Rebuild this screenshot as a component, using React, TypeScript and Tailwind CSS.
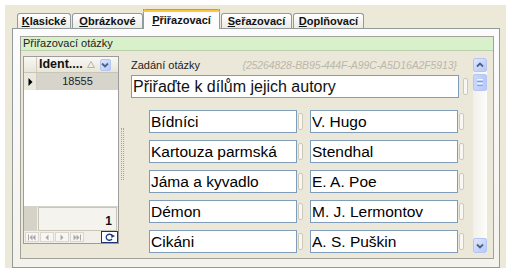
import React from "react";

function Tab({ first, rest, w, ml }: { first: string; rest: string; w: string; ml: string }) {
  return (
    <div
      className={`${w} ${ml} h-[15px] border border-b-0 border-[#919b9c] rounded-t-[3px] bg-gradient-to-b from-[#ffffff] to-[#ecebe5] flex items-center justify-center text-[11px] font-bold leading-none pt-[1px]`}
    >
      <span>
        <span className="underline underline-offset-[1px]">{first}</span>
        {rest}
      </span>
    </div>
  );
}

function Chevron({ up }: { up?: boolean }) {
  return (
    <svg width="8" height="6" viewBox="0 0 8 6">
      {up ? (
        <path d="M1 4.5 L4 1.5 L7 4.5" fill="none" stroke="#4d6185" strokeWidth="1.8" />
      ) : (
        <path d="M1 1.5 L4 4.5 L7 1.5" fill="none" stroke="#4d6185" strokeWidth="1.8" />
      )}
    </svg>
  );
}

function NavBtn({ kind }: { kind: "first" | "prev" | "next" | "last" }) {
  const c = "#a9a9a9";
  return (
    <div className="w-[14px] h-[10px] border border-[#d9d7cf] bg-[#f7f6f2] flex items-center justify-center">
      <svg width="10" height="7" viewBox="0 0 10 7">
        {kind === "first" && (
          <g fill={c}>
            <rect x="1" y="0.5" width="1" height="6" />
            <path d="M5.5 0.5 L2.5 3.5 L5.5 6.5 Z" />
            <path d="M8.5 0.5 L5.5 3.5 L8.5 6.5 Z" />
          </g>
        )}
        {kind === "prev" && <path d="M6.5 0.5 L3.5 3.5 L6.5 6.5 Z" fill={c} />}
        {kind === "next" && <path d="M3.5 0.5 L6.5 3.5 L3.5 6.5 Z" fill={c} />}
        {kind === "last" && (
          <g fill={c}>
            <path d="M1.5 0.5 L4.5 3.5 L1.5 6.5 Z" />
            <path d="M4.5 0.5 L7.5 3.5 L4.5 6.5 Z" />
            <rect x="8" y="0.5" width="1" height="6" />
          </g>
        )}
      </svg>
    </div>
  );
}

function Handle() {
  return <div className="w-[5px] h-[17px] rounded-[2px] border border-[#cdc9ba] bg-[#f8f7f3]" />;
}

function Box({ text, w }: { text: string; w: string }) {
  return (
    <div className={`${w} h-[23px] border border-[#7f9db9] bg-white flex items-center pl-[1px] text-[15.5px] leading-none text-black whitespace-nowrap overflow-hidden`}>
      {text}
    </div>
  );
}

export default function App() {
  const pairs: [string, string][] = [
    ["Bídníci", "V. Hugo"],
    ["Kartouza parmská", "Stendhal"],
    ["Jáma a kyvadlo", "E. A. Poe"],
    ["Démon", "M. J. Lermontov"],
    ["Cikáni", "A. S. Puškin"],
  ];
  return (
    <div className="w-[527px] h-[276px] bg-white overflow-hidden font-['Liberation_Sans',Arial,sans-serif] text-[#111]">
      <div className="mt-[5px] ml-[5px] w-[501px] h-[263px] bg-[#ece9d8] pl-[7px] pt-[4px]">
        {/* tabs */}
        <div className="flex items-end h-[19px] pl-[5px]">
          <Tab first="K" rest="lasické" w="w-[54px]" ml="ml-0" />
          <Tab first="O" rest="brázkové" w="w-[71px]" ml="ml-[1px]" />
          <div className="w-[77px] h-[20px] -mb-px relative z-10 border-x border-[#919b9c] bg-[#fcfcfe] flex flex-col items-center">
            <div className="w-[calc(100%+2px)] -mx-px h-[3px] rounded-t-[3px] bg-[#ffc83c] border-t border-[#e68b2c]" />
            <div className="text-[11px] font-bold leading-none mt-[3px]">
              <span className="underline underline-offset-[1px]">P</span>řiřazovací
            </div>
          </div>
          <Tab first="S" rest="eřazovací" w="w-[71px]" ml="ml-[1px]" />
          <Tab first="D" rest="oplňovací" w="w-[71px]" ml="ml-[1px]" />
        </div>

        {/* panel */}
        <div className="w-[488px] h-[240px] border border-[#919b9c] bg-gradient-to-b from-[#fcfcfe] to-[#f3f2ec] pl-[7px] pt-[7px]">
          <div className="w-[474px] h-[223px] border border-[#a3a29a] bg-[#ebe8da] flex flex-col">
            <div className="h-[14px] bg-[#d9f1cb] border-b border-[#b9d2ad] text-[11px] leading-[13px] pl-[2px] text-[#222]">
              Přiřazovací otázky
            </div>
            <div className="flex pl-[2px] pt-[5px]">
              {/* grid */}
              <div className="w-[96px] h-[188px] border border-[#9c9c9c] bg-white flex flex-col">
                <div className="h-[16px] flex bg-gradient-to-b from-[#f9f8f3] to-[#e8e6da] border-b border-[#c9c6b8]">
                  <div className="w-[13px] border-r border-[#d0cdc0]" />
                  <div className="flex-1 flex items-center pl-[2px]">
                    <span className="text-[12.5px] font-bold leading-none text-[#111]">Ident....</span>
                    <svg className="ml-[4px]" width="8" height="7" viewBox="0 0 8 7">
                      <path d="M4 0.5 L7.5 6.5 L0.5 6.5 Z" fill="none" stroke="#b5b3a8" strokeWidth="1" />
                    </svg>
                    <div className="ml-[5px] w-[11px] h-[12px] rounded-[2px] border border-[#b3c6f4] bg-gradient-to-br from-[#dde6fd] to-[#b7c9f7] flex items-center justify-center">
                      <Chevron />
                    </div>
                  </div>
                </div>
                <div className="h-[17px] flex">
                  <div className="w-[13px] bg-[#ebe9df] border-r border-[#d0cdc0] flex items-center justify-center">
                    <svg width="5" height="8" viewBox="0 0 5 8">
                      <path d="M0.5 0 L4.5 4 L0.5 8 Z" fill="#000" />
                    </svg>
                  </div>
                  <div className="flex-1 bg-[#d7d4cb] text-[11px] leading-none flex items-center justify-center text-[#222]">
                    18555
                  </div>
                </div>
                <div className="flex-1 bg-white" />
                <div className="h-[25px] flex bg-[#f1efe7] border-t border-[#d6d4ca]">
                  <div className="w-[13px] bg-[#d5d2c8]" />
                  <div className="flex-1 ml-[1px] mr-[1px] border border-[#c8c5b7] bg-[#f4f3ed] flex items-end justify-end pr-[4px] pb-[3px] text-[12px] font-bold leading-none">
                    1
                  </div>
                </div>
                <div className="h-[12px] flex items-center bg-[#f1efe7] gap-[1px] pl-[1px]">
                  <NavBtn kind="first" />
                  <NavBtn kind="prev" />
                  <NavBtn kind="next" />
                  <NavBtn kind="last" />
                  <div className="ml-auto w-[17px] h-[12px] border border-[#1c2f78] bg-white flex items-center justify-center">
                    <svg width="12" height="8" viewBox="0 0 12 8">
                      <path d="M8 2.5 A3.2 3 0 1 0 8 6" fill="none" stroke="#1c3a8a" strokeWidth="1.3" />
                      <path d="M7 1 L11 3 L7.5 5 Z" fill="#1c3a8a" />
                    </svg>
                  </div>
                </div>
              </div>

              {/* splitter */}
              <div className="w-[12px] pl-[2px] pt-[72px]">
                <div className="w-[3px] h-[52px] border-x border-dotted border-[#a8a596]" />
              </div>

              {/* right area */}
              <div className="flex pt-[2px]">
                <div className="w-[342px] h-[195px] flex flex-col">
                  <div className="h-[17px] flex items-start justify-between pr-[16px] pt-[1px]">
                    <span className="text-[11px] leading-[13px] text-[#222]">Zadání otázky</span>
                    <span className="text-[10.5px] leading-[13px] italic text-[#bbb7a9] tracking-[-0.1px]">
                      {"{25264828-BB95-444F-A99C-A5D16A2F5913}"}
                    </span>
                  </div>
                  <div className="flex items-center">
                    <div className="w-[328px] h-[23px] border border-[#7f9db9] bg-white flex items-center pl-[1px] text-[16px] leading-none whitespace-nowrap">
                      Přiřaďte k dílům jejich autory
                    </div>
                    <div className="ml-[4px]">
                      <Handle />
                    </div>
                  </div>
                  <div className="mt-[12px] flex flex-col gap-[7px] pl-[18px]">
                    {pairs.map(([a, b]) => (
                      <div key={a} className="flex items-center">
                        <Box text={a} w="w-[148px]" />
                        <div className="ml-[1px]">
                          <Handle />
                        </div>
                        <div className="ml-[7px]">
                          <Box text={b} w="w-[148px]" />
                        </div>
                        <div className="ml-[1px]">
                          <Handle />
                        </div>
                      </div>
                    ))}
                  </div>
                </div>
                {/* scrollbar */}
                <div className="w-[14px] h-[195px] flex flex-col bg-gradient-to-r from-[#f1efe8] to-[#fdfdfb]">
                  <div className="h-[14px] rounded-[2px] border border-[#b3c6f4] bg-gradient-to-br from-[#e0e8fe] to-[#b5c8f7] flex items-center justify-center">
                    <Chevron up />
                  </div>
                  <div className="mt-[2px] h-[17px] rounded-[2px] border border-[#b3c6f4] bg-gradient-to-r from-[#c9d7fb] to-[#b7c9f6] flex flex-col items-center justify-center gap-[1px]">
                    <div className="w-[6px] h-[1px] bg-[#eef3ff]" />
                    <div className="w-[6px] h-[1px] bg-[#8aa3e3]" />
                    <div className="w-[6px] h-[1px] bg-[#eef3ff]" />
                    <div className="w-[6px] h-[1px] bg-[#8aa3e3]" />
                  </div>
                  <div className="flex-1" />
                  <div className="h-[15px] rounded-[2px] border border-[#b3c6f4] bg-gradient-to-br from-[#e0e8fe] to-[#b5c8f7] flex items-center justify-center">
                    <Chevron />
                  </div>
                </div>
              </div>
            </div>
          </div>
        </div>
      </div>
    </div>
  );
}
